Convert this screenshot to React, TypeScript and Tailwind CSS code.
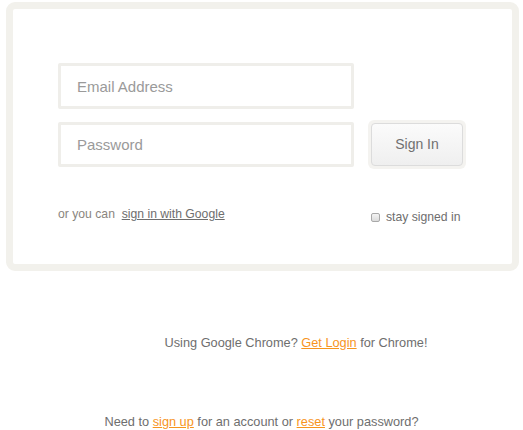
import React from "react";

export default function App() {
  return (
    <div className="w-[523px] h-[430px] bg-white" style={{ fontFamily: '"Liberation Sans", Arial, sans-serif' }}>
      <div className="pt-[2px] pl-[6px]">
        <div className="w-[513px] h-[269px] border-[7px] border-[#f2f1ec] rounded-[9px] bg-white pl-[45px] pt-[54px]">
          <input
            type="text"
            placeholder="Email Address"
            className="block w-[296px] h-[46px] border-[3px] border-[#efeeea] rounded-[2px] pl-4 text-[15px] text-[#666] placeholder:text-[#9a9a9a] outline-none"
          />
          <div className="flex items-start mt-[11px]">
            <input
              type="password"
              placeholder="Password"
              className="block mt-[2px] w-[296px] h-[45px] border-[3px] border-[#efeeea] rounded-[2px] pl-4 text-[15px] text-[#666] placeholder:text-[#9a9a9a] outline-none"
            />
            <div className="ml-[14px] p-[3px] rounded-[6px] bg-[#f4f3f0]">
              <button className="w-[92px] h-[43px] border border-[#dcdcdc] rounded-[4px] bg-gradient-to-b from-[#fbfbfb] to-[#efefef] text-[14px] text-[#707070]">
                Sign In
              </button>
            </div>
          </div>
          <div className="flex items-start mt-[36px] text-[12.2px] leading-[18px]">
            <div className="w-[313px] text-[#8a857e]">
              or you can&nbsp;&nbsp;<span className="underline text-[#6e6e6e]">sign in with Google</span>
            </div>
            <div className="flex items-center mt-[3px] text-[#6e6e6e]">
              <span className="inline-block w-[9px] h-[9px] border border-[#a9a9a9] rounded-[2px] bg-gradient-to-b from-[#f4f4f4] to-[#dcdcdc]" />
              <span className="ml-[6px]">stay signed in</span>
            </div>
          </div>
        </div>
      </div>
      <div className="mt-[63px] text-center text-[12.75px] leading-[18px] text-[#6e6e6e] pl-[69px]">
        Using Google Chrome? <span className="underline text-[#f7941d]">Get Login</span> for Chrome!
      </div>
      <div className="mt-[61px] text-center text-[12.75px] leading-[18px] text-[#6e6e6e]">
        Need to <span className="underline text-[#f7941d]">sign up</span> for an account or{" "}
        <span className="underline text-[#f7941d]">reset</span> your password?
      </div>
    </div>
  );
}
